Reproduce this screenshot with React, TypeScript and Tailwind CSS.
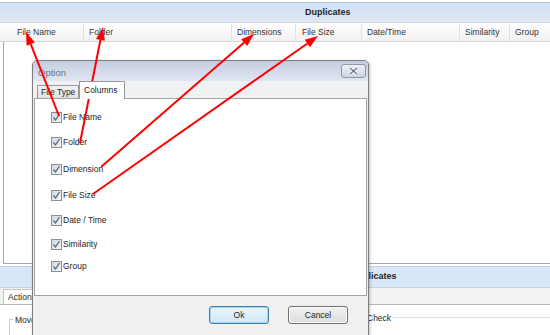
import React from 'react';

const headers = [
  { label: 'File Name', w: 'w-[84px] pl-[17px]' },
  { label: 'Folder', w: 'w-[148px] pl-[5px]' },
  { label: 'Dimensions', w: 'w-[64px] pl-[5px]' },
  { label: 'File Size', w: 'w-[66px] pl-[6px]' },
  { label: 'Date/Time', w: 'w-[98px] pl-[5px]' },
  { label: 'Similarity', w: 'w-[50px] pl-[5px]' },
  { label: 'Group', w: 'flex-1 pl-[5px]' },
];

// spacing between rows is uneven in the original
const options = [
  { label: 'File Name', mt: 'mt-0' },
  { label: 'Folder', mt: 'mt-[13px]' },
  { label: 'Dimension', mt: 'mt-[15px]' },
  { label: 'File Size', mt: 'mt-[14px]' },
  { label: 'Date / Time', mt: 'mt-[13px]' },
  { label: 'Similarity', mt: 'mt-[12px]' },
  { label: 'Group', mt: 'mt-[10px]' },
];

const arrows = [
  { x1: 59, y1: 116, x2: 26, y2: 32 },
  { x1: 80, y1: 143, x2: 103, y2: 27 },
  { x1: 101, y1: 167, x2: 254, y2: 34 },
  { x1: 93, y1: 194, x2: 318, y2: 36 },
];

function Arrow({ x1, y1, x2, y2 }: { x1: number; y1: number; x2: number; y2: number }) {
  const dx = x2 - x1;
  const dy = y2 - y1;
  const len = Math.sqrt(dx * dx + dy * dy);
  const ux = dx / len;
  const uy = dy / len;
  const bx = x2 - ux * 13;
  const by = y2 - uy * 13;
  const px = -uy * 4.5;
  const py = ux * 4.5;
  return (
    <g>
      <line x1={x1} y1={y1} x2={bx} y2={by} stroke="#f00" strokeWidth={2} />
      <polygon
        points={`${x2},${y2} ${bx + px},${by + py} ${bx - px},${by - py}`}
        fill="#f00"
      />
    </g>
  );
}

function Check() {
  return (
    <span className="flex h-[11px] w-[11px] items-center justify-center border border-[#8e8f8f] bg-gradient-to-br from-[#d8d8d8] to-[#f4f4f4]">
      <svg width="9" height="9" viewBox="0 0 9 9">
        <path d="M1.5 4.5 L3.5 7 L7.5 1" fill="none" stroke="#4a6594" strokeWidth="1.3" />
      </svg>
    </span>
  );
}

export default function App() {
  return (
    <div className="relative h-[335px] w-[550px] overflow-hidden bg-white font-['Liberation_Sans',Arial,sans-serif] text-[8.5px] text-[#1e1e1e]">
      {/* main window behind */}
      <div className="flex flex-col">
        <div className="mt-[2px] flex h-[20px] items-center border-t border-[#b9c3d1] bg-gradient-to-b from-[#d3e1f4] to-[#dde8f7] pl-[305px] text-[9px] font-bold">
          Duplicates
        </div>
        <div className="flex h-[20px] items-center border-y border-[#d6d6d6] bg-gradient-to-b from-white to-[#f1f1f1] pt-[1px] text-[#333]">
          {headers.map((h, i) => (
            <div
              key={h.label}
              className={`flex h-full items-center ${h.w} ${i < headers.length - 1 ? 'border-r border-[#e0e0e0]' : ''}`}
            >
              {h.label}
            </div>
          ))}
        </div>
        <div className="ml-[3px] h-[222px] border-l border-b border-[#a7a7a7] bg-white" />
        <div className="mt-[2px] flex h-[22px] items-center border-y border-[#c3d0e2] bg-[#d8e6f8] pl-[351px] text-[9px] font-bold">
          Duplicates
        </div>
        <div className="flex h-[17px] items-end border-b border-[#b8b8b8] bg-[#f2f2f2] pl-[3px]">
          <div className="h-[15px] border-x border-t border-[#c5c5c5] bg-white px-[4px] leading-[14px]">Action</div>
        </div>
        <div className="flex h-[30px] bg-white">
          <div className="ml-[9px] mt-[14px] h-[30px] w-[340px] border-l border-t border-[#d0d0d0]">
            <span className="relative -top-[6px] ml-[4px] bg-white px-[1px]">Move</span>
          </div>
          <div className="mt-[12px] flex flex-1 items-start">
            <span className="relative -top-[5px] ml-[18px] bg-white">Check</span>
            <span className="flex-1 border-t border-[#dce3ec]" />
          </div>
        </div>
      </div>

      {/* Option dialog */}
      <div className="absolute left-[32px] top-[60px] flex h-[290px] w-[337px] flex-col rounded-t-[5px] border border-[#7d7d7d] bg-[#eef0f3] shadow-[1px_1px_3px_rgba(0,0,0,0.25)]">
        <div className="flex h-[20px] items-start justify-between rounded-t-[4px] bg-gradient-to-b from-[#c4cde0] to-[#e0e7f3] pl-[5px] pr-[2px]">
          <span className="mt-[5px] text-[9.5px] text-[#6e7075]">Option</span>
          <span className="mt-[3px] flex h-[14px] w-[25px] items-center justify-center rounded-[3px] border border-[#8e97a8] bg-gradient-to-b from-[#eef1f6] to-[#cdd4e0]">
            <svg width="9" height="8" viewBox="0 0 9 8">
              <path d="M1 1 L8 7 M8 1 L1 7" stroke="#fff" strokeWidth="3" />
              <path d="M1 1 L8 7 M8 1 L1 7" stroke="#6b7280" strokeWidth="1.3" />
            </svg>
          </span>
        </div>
        <div className="flex h-[17px] items-end bg-[#f0f1f3] pl-[4px]">
          <div className="flex h-[13px] w-[42px] items-center border-x border-t border-[#9a9a9a] bg-gradient-to-b from-[#f3f3f3] to-[#e2e2e2] pl-[3px]">
            File Type
          </div>
          <div className="relative top-[1px] z-10 flex h-[18px] w-[46px] items-center border-x border-t border-[#9a9a9a] bg-white pl-[4px]">
            Columns
          </div>
        </div>
        <div className="mx-[1px] h-[198px] border border-[#a3a3a3] bg-white pl-[16px] pt-[12px]">
          {options.map((o) => (
            <div key={o.label} className={`flex h-[12px] items-center gap-[1px] ${o.mt}`}>
              <Check />
              <span>{o.label}</span>
            </div>
          ))}
        </div>
        <div className="flex flex-1 justify-end gap-[19px] bg-[#f0f0f0] pr-[20px] pt-[10px]">
          <button className="h-[18px] w-[60px] rounded-[3px] border border-[#3c7fb1] bg-gradient-to-b from-[#eaf6fd] to-[#cfe7f7] text-[8.5px] shadow-[inset_0_0_0_1px_#a6d3ef]">
            Ok
          </button>
          <button className="h-[18px] w-[60px] rounded-[3px] border border-[#707070] bg-gradient-to-b from-[#f2f2f2] to-[#dcdcdc] text-[8.5px] shadow-[inset_0_0_0_1px_#fbfbfb]">
            Cancel
          </button>
        </div>
      </div>

      {/* red annotation arrows */}
      <svg className="pointer-events-none absolute inset-0" width="550" height="335">
        {arrows.map((a, i) => (
          <Arrow key={i} {...a} />
        ))}
      </svg>
    </div>
  );
}
